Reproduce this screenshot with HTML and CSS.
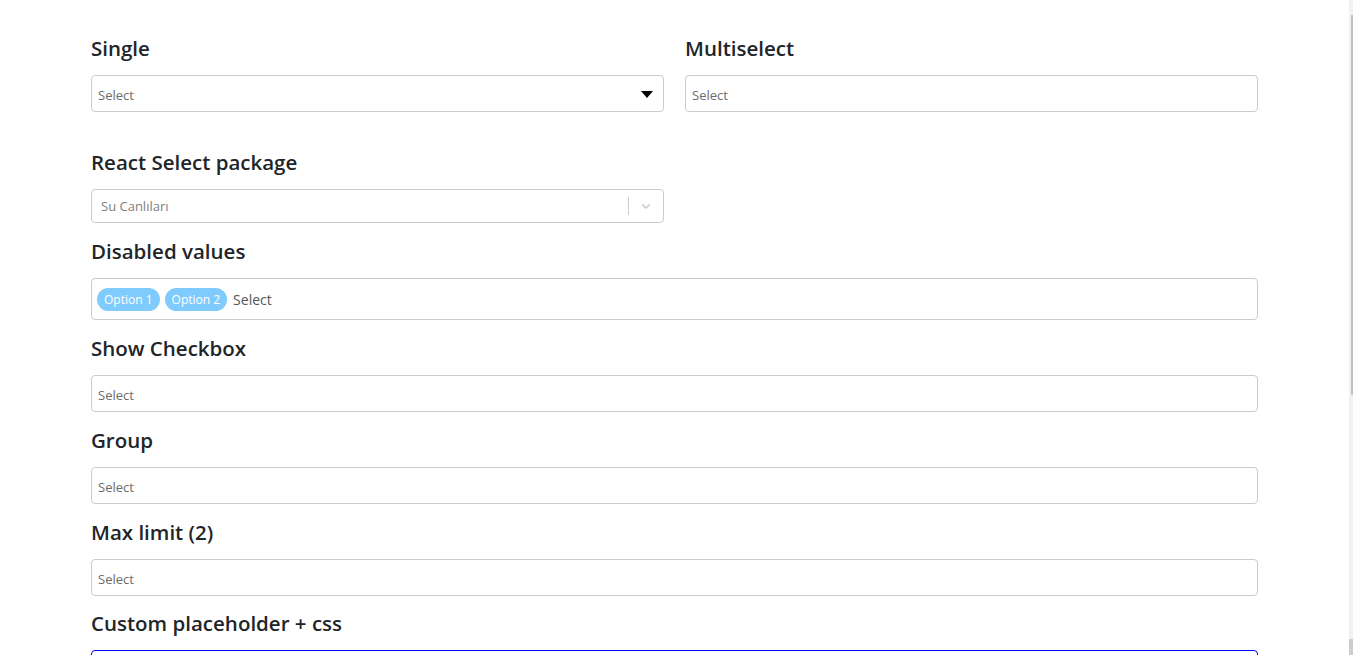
FILE: index.html
```html
<!DOCTYPE html>
<html lang="en">
<head>
<meta charset="utf-8">
<title>Multiselect demo</title>
<link rel="stylesheet" href="styles.css">
</head>
<body>
<div class="container">
  <div class="row">
    <div class="col">
      <h5 class="title">Single</h5>
      <div class="search-wrapper single">
        <span class="placeholder">Select</span>
        <svg class="caret" width="12" height="7" viewBox="0 0 12 7"><path d="M0 0 H12 L6 7 Z" fill="#000"/></svg>
      </div>
    </div>
    <div class="col">
      <h5 class="title">Multiselect</h5>
      <div class="search-wrapper">
        <span class="placeholder">Select</span>
      </div>
    </div>
  </div>

  <section class="section half first">
    <h5 class="title">React Select package</h5>
    <div class="rs-control">
      <span class="rs-value">Su Canlıları</span>
      <span class="rs-indicators">
        <span class="rs-sep"></span>
        <svg class="rs-chevron" width="20" height="20" viewBox="0 0 20 20"><path d="M4.516 7.548c.436-.446 1.043-.481 1.576 0L10 11.295l3.908-3.747c.533-.481 1.141-.446 1.574 0 .436.445.408 1.197 0 1.615-.406.418-4.695 4.502-4.695 4.502a1.095 1.095 0 0 1-1.576 0S4.924 9.581 4.516 9.163c-.409-.418-.436-1.170 0-1.615z" fill="#ccc"/></svg>
      </span>
    </div>
  </section>

  <section class="section">
    <h5 class="title">Disabled values</h5>
    <div class="search-wrapper chips">
      <span class="chip">Option 1</span>
      <span class="chip">Option 2</span>
      <span class="placeholder big">Select</span>
    </div>
  </section>

  <section class="section">
    <h5 class="title">Show Checkbox</h5>
    <div class="search-wrapper"><span class="placeholder">Select</span></div>
  </section>

  <section class="section">
    <h5 class="title">Group</h5>
    <div class="search-wrapper"><span class="placeholder">Select</span></div>
  </section>

  <section class="section">
    <h5 class="title">Max limit (2)</h5>
    <div class="search-wrapper"><span class="placeholder">Select</span></div>
  </section>

  <section class="section last">
    <h5 class="title">Custom placeholder + css</h5>
    <div class="search-wrapper custom"><span class="placeholder">Select</span></div>
  </section>
</div>
<div class="scrollbar"><div class="thumb"></div><div class="btn-down"></div></div>
</body>
</html>
```

FILE: styles.css
```css
html, body {
  margin: 0;
  padding: 0;
  background: #fff;
  overflow: hidden;
}
body {
  font-family: "Open Sans", "Noto Sans", sans-serif;
  color: #212529;
  height: 655px;
}
.container {
  width: 1167px;
  margin-left: 91px;
  padding-top: 36px;
}
.row {
  display: flex;
  gap: 21px;
  margin-bottom: 38px;
}
.col {
  flex: 1 1 0;
}
.title {
  margin: 0 0 15px 0;
  font-size: 20.5px;
  font-weight: 600;
  line-height: 24px;
  letter-spacing: 0;
}
.section {
  margin-top: 16px;
}
.section.first {
  margin-top: 0;
}
.section.last {
  margin-top: 15px;
}
.section.half {
  width: 573px;
}
.search-wrapper {
  border: 1px solid #ccc;
  border-radius: 4px;
  box-sizing: border-box;
  height: 37px;
  padding: 0 6px;
  display: flex;
  align-items: center;
  gap: 5px;
  position: relative;
}
.search-wrapper.custom {
  border-color: #0000ff;
}
.search-wrapper.chips {
  height: 42px;
  padding: 0 5px;
}
.placeholder {
  font-size: 13px;
  color: #6c6c6c;
  padding-top: 3px;
}
.placeholder.big {
  font-size: 14px;
  color: #555;
  padding-top: 0;
  margin-left: 1px;
}
.caret {
  position: absolute;
  right: 10px;
  top: 15px;
}
.chip {
  background: #80cbfd;
  color: #fff;
  font-size: 12px;
  border-radius: 12px;
  height: 23px;
  padding: 0 7px;
  display: inline-flex;
  align-items: center;
}
.rs-control {
  border: 1px solid #ccc;
  border-radius: 4px;
  box-sizing: border-box;
  height: 34px;
  display: flex;
  align-items: center;
  justify-content: space-between;
  padding-left: 9px;
}
.rs-value {
  font-size: 13px;
  color: #808080;
}
.rs-indicators {
  display: flex;
  align-items: center;
  height: 100%;
}
.rs-sep {
  width: 1px;
  height: 18px;
  background: #ccc;
}
.rs-chevron {
  margin: 0 10px 0 10px;
  width: 14px;
  height: 14px;
}
.scrollbar {
  position: fixed;
  top: 0;
  right: 0;
  width: 4px;
  height: 655px;
  background: #f1f1f1;
}
.thumb {
  position: absolute;
  left: 2px;
  right: 0;
  top: 15px;
  height: 380px;
  background: #c1c1c1;
}
.btn-down {
  position: absolute;
  left: 0;
  right: 0;
  bottom: 0;
  height: 16px;
  background: #cdcdcd;
}
```
